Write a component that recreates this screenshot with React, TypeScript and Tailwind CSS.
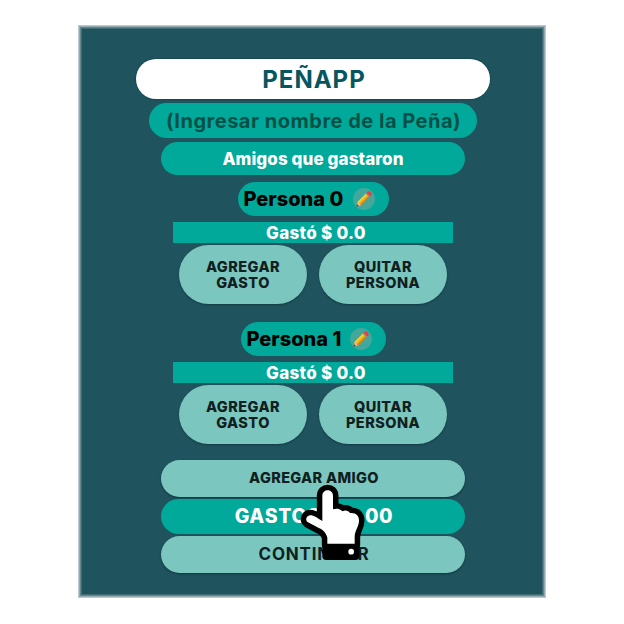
import type { ReactNode } from "react";

function PencilBadge() {
  return (
    <span className="flex size-[22px] items-center justify-center rounded-full bg-[#43a79b]">
      <svg viewBox="0 0 22 22" className="size-[22px]">
        <g transform="translate(3.4 18.800) rotate(-45.5)">
          <path d="M0 0 4.600 -2.600V2.600Z" fill="#e8bd8b" />
          <path d="M0 0 2.3 -1.200V1.200Z" fill="#3d3630" />
          <rect x="4.2" y="-2.600" width="12" height="2" fill="#ffd02c" />
          <rect x="4.2" y="-0.9" width="12" height="2" fill="#fdb515" />
          <rect x="4.2" y="1" width="12" height="1.600" fill="#d98312" />
          <rect x="15.800" y="-2.600" width="1.500" height="5.200" fill="#b0887c" />
          <path d="M17.100 -2.600H18.700Q20.400 -2.4 20.400 0T18.700 2.600H17.100Z" fill="#dd4449" />
        </g>
      </svg>
    </span>
  );
}

function RoundButton({ children }: { children: ReactNode }) {
  return (
    <button className="h-[59px] w-[128px] rounded-[30px] bg-[#7bc6be] pt-px text-center text-[14.5px] leading-4 tracking-[0.45px] text-[#10201f] font-extrabold shadow-[0_1px_2px_rgba(0,25,35,0.4)]">
      {children}
    </button>
  );
}

function Person({ name, pill }: { name: string; pill: string }) {
  return (
    <section className="flex h-[140px] w-[280px] flex-col items-center">
      <div className={`flex h-[34px] shrink-0 items-center rounded-full bg-[#00a99a] text-[20px] font-extrabold text-black ${pill}`}>
        <span className="flex-1 whitespace-nowrap pl-[6px] tracking-[0px]">{name}</span>
        <span className="pr-[14px]">
          <PencilBadge />
        </span>
      </div>
      <div className="mt-[6.5px] flex h-[20.5px] w-full shrink-0 items-center justify-center bg-[#00a99a] pl-[6px] pt-[2px] text-[17px] font-extrabold tracking-[0.3px] text-white">
        Gastó $ 0.0
      </div>
      <div className="mt-[2.5px] flex gap-3">
        <RoundButton>
          AGREGAR
          <br />
          GASTO
        </RoundButton>
        <RoundButton>
          QUITAR
          <br />
          PERSONA
        </RoundButton>
      </div>
    </section>
  );
}

function HandCursor() {
  return (
    <svg viewBox="0 0 270 270" className="absolute left-[290px] top-[475px] size-[90px]">
      <path
        d="M97 62C97 40 129 40 129 62V103C140 99 151 101 157 109C166 104 176 107 180 114C198 112 208 122 207 139C206 156 194 167 194 187V210H112V188C108 173 98 164 88 160L54 142C43 134 50 119 65 121C77 123 84 132 97 138Z"
        fill="#fff"
        stroke="#000"
        strokeWidth="33"
        strokeLinejoin="round"
        paintOrder="stroke"
      />
      <path d="M97 206H208V243Q208 255 196 255H109Q97 255 97 243Z" fill="#000" />
      <circle cx="183.500" cy="230" r="8.500" fill="#fff" />
    </svg>
  );
}

export default function App() {
  return (
    <div className="relative h-[624px] w-[624px] overflow-hidden bg-white pl-[78px] pt-[25px] font-['Inter','Liberation_Sans',sans-serif]">
      <main className="flex h-[573px] w-[468px] flex-col items-center border border-[#bccacd] bg-[#1f535d] pl-[2px] pt-[32.5px] shadow-[inset_0_0_0_1px_#93abaf,inset_0_0_0_2px_#64878e,inset_0_0_0_3px_#3f6c74]">
        <h1 className="flex h-[40.5px] w-[353.5px] shrink-0 items-center justify-center rounded-full bg-white pl-[2px] pt-[2px] text-[24px] font-bold tracking-[1px] text-[#07565f] shadow-[0_0_1px_1px_#174a55]">
          PEÑAPP
        </h1>
        <div className="mt-[4px] flex h-[34.5px] w-[328px] shrink-0 items-center justify-center whitespace-nowrap rounded-full bg-[#00a99a] pl-px pt-px text-[20px] font-bold tracking-[0.5px] text-[#045047]">
          (Ingresar nombre de la Peña)
        </div>
        <h2 className="mt-[4.5px] flex h-[33px] w-[304px] shrink-0 items-center justify-center rounded-full bg-[#00a99a] pt-[2px] text-[17px] font-extrabold tracking-[0.1px] text-white">
          Amigos que gastaron
        </h2>
        <div className="mt-[6.5px] flex shrink-0 flex-col">
          <Person name="Persona 0" pill="w-[151px]" />
          <Person name="Persona 1" pill="w-[145px]" />
        </div>
        <button className="-mt-[2px] h-[37px] w-[304px] shrink-0 rounded-full bg-[#7bc6be] pl-[2px] text-[14.5px] font-extrabold tracking-[0.35px] text-[#10201f] shadow-[0_1px_2px_rgba(0,25,35,0.5)]">
          AGREGAR AMIGO
        </button>
        <div className="mt-[2.5px] flex h-[34.5px] w-[304px] shrink-0 items-center justify-center rounded-full bg-[#00a99a] pl-[2px] pt-px text-[19.5px] font-extrabold tracking-[0.7px] text-white">
          GASTOS $ 0.00
        </div>
        <button className="mt-[2px] h-[37px] w-[304px] shrink-0 rounded-full bg-[#7bc6be] pl-[2px] pt-px text-[17px] font-bold tracking-[0.8px] text-[#10201f] shadow-[0_1px_2px_rgba(0,25,35,0.5)]">
          CONTINUAR
        </button>
      </main>
      <HandCursor />
    </div>
  );
}
